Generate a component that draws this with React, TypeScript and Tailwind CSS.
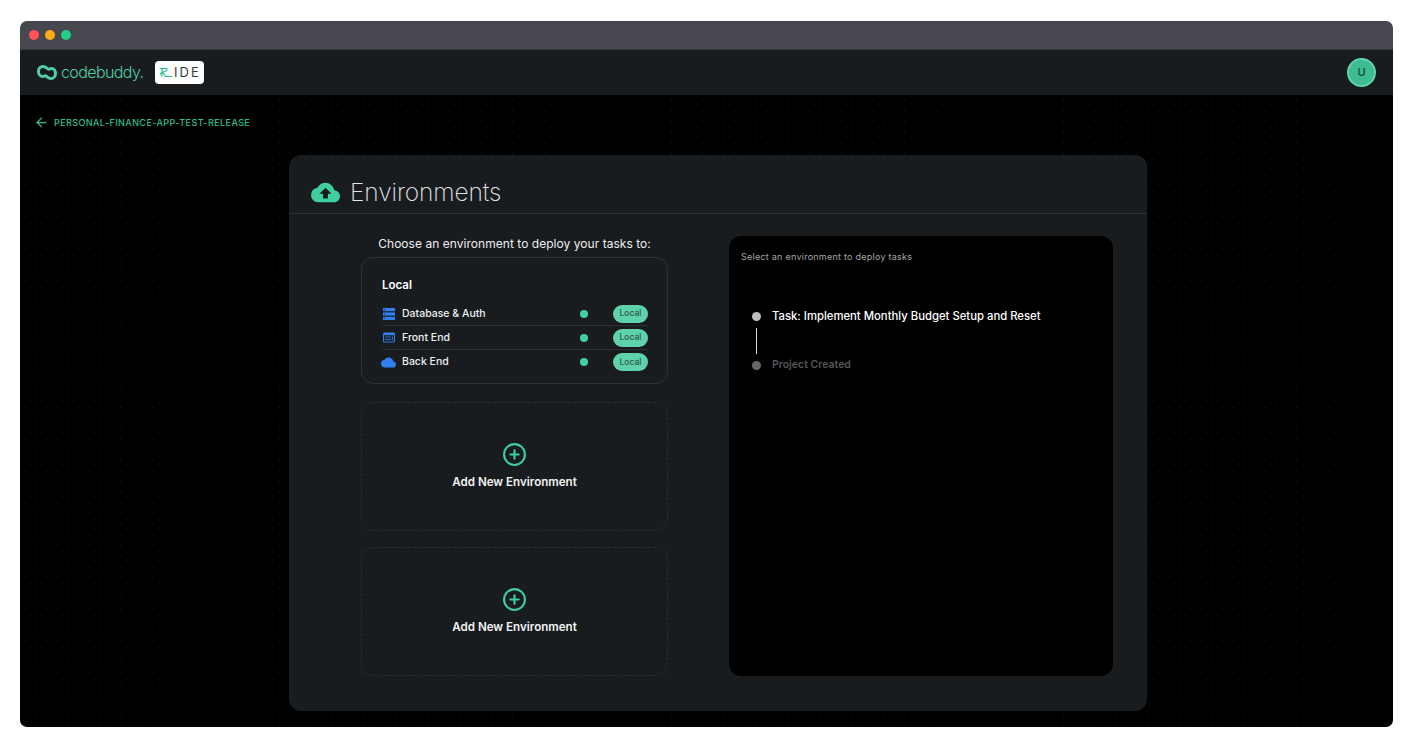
import { ArrowLeft, CirclePlus } from "lucide-react";
import { MdCloud, MdCloudUpload } from "react-icons/md";

const font = "font-['Inter','Noto_Sans',sans-serif]";

const CodebuddyMark = () => (
    <svg width="20" height="15" viewBox="0 0 20 15" fill="none" stroke="#4fd1a5" strokeWidth="3">
        <path d="M6 1.5 C8.5 1.5 9.5 3 11 4 C12 4.6 13 3.6 14.5 3.6 C17 3.6 18.5 5.8 18.5 8.4 C18.5 11.4 16.5 13.5 14 13.5 C11.5 13.5 10.5 12 9 11 C8 10.4 7 11.4 5.5 11.4 C3 11.4 1.5 9 1.5 6.4 C1.5 3.4 3.5 1.5 6 1.5 Z" />
    </svg>
);

const RideMark = () => (
    <svg width="14" height="11" viewBox="0 0 14 11" fill="none" stroke="#22c58f" strokeWidth="1.2">
        <path d="M0.5 1.5 H8 C8 4 6 5 3.5 5 L6.5 9.5 H13.5" />
        <path d="M3.5 5 L1 7.5 M3 2 V9.5" />
    </svg>
);

const DatabaseIcon = () => (
    <svg width="12" height="12" viewBox="0 0 12 12" fill="none" className="ml-[1px]">
        <rect x="0" y="0" width="12" height="3.2" fill="#2f7fec" />
        <rect x="0" y="4.4" width="12" height="3.2" fill="#2f7fec" />
        <rect x="0" y="8.8" width="12" height="3.2" fill="#2f7fec" />
        <path d="M1 1.6 H2 M1 6 H2 M1 10.4 H2" stroke="#181c1f" strokeWidth="0.8" />
    </svg>
);

const WindowIcon = () => (
    <svg width="12" height="11" viewBox="0 0 13 11" fill="none" className="ml-[1px]">
        <rect x="0.6" y="0.6" width="11.8" height="9.8" rx="1" stroke="#2f7fec" strokeWidth="1.2" />
        <rect x="0.6" y="0.6" width="11.8" height="2.4" fill="#2f7fec" />
        <path d="M2.4 5 H8.6 M2.4 7.6 H8.6" stroke="#2f7fec" strokeWidth="1" />
        <path d="M10.2 4.4 V8.4" stroke="#2f7fec" strokeWidth="1" />
    </svg>
);

const services = [
    { name: "Database & Auth", icon: <DatabaseIcon /> },
    { name: "Front End", icon: <WindowIcon /> },
    { name: "Back End", icon: <MdCloud className="w-[15px] h-[15px] -ml-[1px] text-[#2f7fec]" /> },
];

const AddEnvironment = () => (
    <div className="h-[128.5px] flex flex-col items-center justify-center rounded-xl border border-dashed border-[#2a2f33]">
        <CirclePlus className="w-[25px] h-[25px] text-[#3fcf9f] mb-[7px] mt-[-1px]" strokeWidth={2} />
        <p className="text-[11.6px] font-semibold text-[#f1f2f3] leading-4">Add New Environment</p>
    </div>
);

const App = () => {
    return (
        <div className={`${font} h-[745px] w-[1412px] overflow-hidden bg-white pt-[21px] pl-[20px] pr-[19px] pb-[18px]`}>
            <div className="flex flex-col h-full rounded-[7px] overflow-hidden">
                <div className="h-[29px] shrink-0 bg-[#47474f] flex items-center gap-[6px] pl-[9px] border-b border-[#3a3a40]">
                    <span className="w-[10px] h-[10px] rounded-full bg-[#ff5258]" />
                    <span className="w-[10px] h-[10px] rounded-full bg-[#ffac12]" />
                    <span className="w-[10px] h-[10px] rounded-full bg-[#22cf84]" />
                </div>

                <header className="h-[45px] shrink-0 bg-[#181c1f] flex items-center justify-between pl-[17px] pr-[17px]">
                    <div className="flex items-center">
                        <CodebuddyMark />
                        <span className="ml-[4px] -mt-[2px] text-[16px] font-light tracking-[-0.6px] text-[#4fd1a5]">codebuddy.</span>
                        <div className="ml-[12px] w-[49px] h-[23px] rounded bg-white flex items-center justify-center gap-[1px]">
                            <RideMark />
                            <span className="text-[13px] tracking-[2px] text-[#33383e] leading-none">IDE</span>
                        </div>
                    </div>
                    <div className="w-[29px] h-[29px] rounded-full bg-[#3fbb92] border-2 border-[#5fd3ac] flex items-center justify-center text-[11px] font-medium text-[#14493a]">
                        U
                    </div>
                </header>

                <main className="flex-1 bg-black bg-[radial-gradient(#222222_0.8px,transparent_0.8px)] bg-[size:10.6px_10.6px] flex flex-col">
                    <div className="flex items-start gap-[5px] pl-[14px] pt-[20px] h-[60px]">
                        <ArrowLeft className="w-[15px] h-[15px] text-[#2fbf8e]" strokeWidth={2} />
                        <span className="text-[9px] font-medium tracking-[0.42px] text-[#2fbf8e] leading-[15px]">
                            PERSONAL-FINANCE-APP-TEST-RELEASE
                        </span>
                    </div>

                    <section className="w-[858px] h-[556px] ml-[269px] rounded-xl bg-[#181c1f] flex flex-col">
                        <div className="h-[59px] shrink-0 flex items-center gap-[10px] pl-[22px] border-b border-[#2b3035] pt-[16px]">
                            <MdCloudUpload className="w-[29px] h-[29px] text-[#3fcf9f]" />
                            <h1 className="text-[24.5px] font-extralight text-[#e4e6e8] tracking-[-0.1px]">Environments</h1>
                        </div>

                        <div className="flex pt-[22px] pl-[72px] pr-[34px] gap-[61px]">
                            <div className="w-[307px] shrink-0 flex flex-col">
                                <p className="text-[12px] tracking-[0.04px] text-center text-[#eceef0] leading-[16px] mb-[5px]">
                                    Choose an environment to deploy your tasks to:
                                </p>
                                <div className="h-[127px] rounded-xl border border-[#2c3136] pt-[20px] pl-[20px] pr-[19px]">
                                    <h2 className="text-[11.5px] font-semibold text-white leading-[15px] mb-[9px]">Local</h2>
                                    {services.map((s, i) => (
                                        <div
                                            key={s.name}
                                            className={`h-[24px] flex items-center ${i < 2 ? "border-b border-[#2b3035]" : ""}`}
                                        >
                                            <span className="w-[20px] flex items-center">{s.icon}</span>
                                            <span className="text-[10.5px] font-medium text-[#eef0f1]">{s.name}</span>
                                            <span className="ml-auto w-[8px] h-[8px] rounded-full bg-[#42cf9f]" />
                                            <span className="ml-[25px] w-[35px] h-[18px] rounded-full bg-[#5ed2ab] flex items-center justify-center text-[8.5px] font-medium text-[#2b5a4c]">
                                                Local
                                            </span>
                                        </div>
                                    ))}
                                </div>
                                <div className="mt-[18px] flex flex-col gap-[16.5px]">
                                    <AddEnvironment />
                                    <AddEnvironment />
                                </div>
                            </div>

                            <div className="w-[384px] h-[440px] rounded-xl bg-black pt-[15px] pl-[12px]">
                                <p className="text-[9px] tracking-[0.25px] text-[#a3a6a9] leading-[12px]">Select an environment to deploy tasks</p>
                                <div className="mt-[45px] pl-[11px] flex items-center gap-[11px] h-[16px]">
                                    <span className="w-[9px] h-[9px] rounded-full bg-[#bdbdbd]" />
                                    <span className="text-[11.3px] font-medium text-white">Task: Implement Monthly Budget Setup and Reset</span>
                                </div>
                                <div className="ml-[15px] mt-[4px] w-[1px] h-[26px] bg-[#d8d8d8]" />
                                <div className="mt-[3px] pl-[11px] flex items-center gap-[11px] h-[16px]">
                                    <span className="w-[9px] h-[9px] rounded-full bg-[#666666]" />
                                    <span className="text-[10.5px] font-semibold text-[#555759]">Project Created</span>
                                </div>
                            </div>
                        </div>
                    </section>
                </main>
            </div>
        </div>
    );
};

export default App;
